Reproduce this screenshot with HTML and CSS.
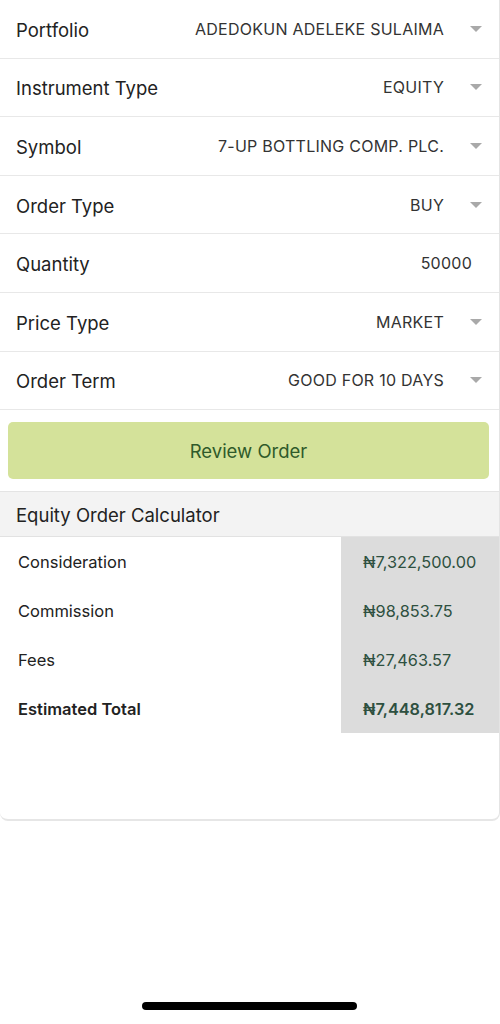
FILE: index.html
```html
<!DOCTYPE html>
<html>
<head>
<meta charset="utf-8">
<link rel="stylesheet" href="styles.css">
</head>
<body>
<div class="card">
  <div class="form">
    <div class="row"><span class="label">Portfolio</span><span class="value"><span class="text">ADEDOKUN ADELEKE SULAIMA</span><span class="caret"></span></span></div>
    <div class="row"><span class="label">Instrument Type</span><span class="value"><span class="text">EQUITY</span><span class="caret"></span></span></div>
    <div class="row"><span class="label">Symbol</span><span class="value"><span class="text">7-UP BOTTLING COMP. PLC.</span><span class="caret"></span></span></div>
    <div class="row"><span class="label">Order Type</span><span class="value"><span class="text">BUY</span><span class="caret"></span></span></div>
    <div class="row"><span class="label">Quantity</span><span class="value"><span class="text qty">50000</span></span></div>
    <div class="row"><span class="label">Price Type</span><span class="value"><span class="text">MARKET</span><span class="caret"></span></span></div>
    <div class="row"><span class="label">Order Term</span><span class="value"><span class="text">GOOD FOR 10 DAYS</span><span class="caret"></span></span></div>
  </div>
  <div class="btn-wrap"><button class="btn">Review Order</button></div>
  <div class="calc-head">Equity Order Calculator</div>
  <div class="calc">
    <div class="c-label">Consideration</div><div class="c-val">₦7,322,500.00</div>
    <div class="c-label">Commission</div><div class="c-val">₦98,853.75</div>
    <div class="c-label">Fees</div><div class="c-val">₦27,463.57</div>
    <div class="c-label bold">Estimated Total</div><div class="c-val bold">₦7,448,817.32</div>
  </div>
  <div class="spacer"></div>
</div>
<div class="home"></div>
</body>
</html>
```
FILE: styles.css
```css
* { box-sizing: border-box; }
html, body { margin: 0; padding: 0; background: #fff; }
body {
  width: 500px;
  height: 1024px;
  font-family: Inter, "Liberation Sans", sans-serif;
  color: #222;
  position: relative;
}
.card {
  width: 500px;
  border-right: 1px solid #e4e4e4;
  border-bottom: 2px solid #e6e6e6;
  border-radius: 0 0 8px 8px;
  overflow: hidden;
}
.form { display: flex; flex-direction: column; }
.row {
  height: 58.6px;
  display: flex;
  align-items: center;
  justify-content: space-between;
  border-bottom: 1.5px solid #e8e8e8;
  padding: 0 17px 0 16px;
}
.label { font-size: 18.5px; color: #222; padding-top: 2px; white-space: nowrap; }
.value { display: flex; align-items: center; }
.text { font-size: 16px; color: #333; letter-spacing: 0.25px; white-space: nowrap; }
.qty { margin-right: 10px; }
.caret {
  width: 0; height: 0;
  border-left: 6px solid transparent;
  border-right: 6px solid transparent;
  border-top: 6px solid #a9a9a9;
  margin-left: 26px;
}
.btn-wrap { padding: 12px 10px 12px 8px; border-bottom: 1.5px solid #e4e4e4; }
.btn {
  display: block;
  width: 100%;
  height: 57px;
  border: none;
  border-radius: 5px;
  background: #d4e29a;
  color: #2f5a2a;
  font-family: inherit;
  font-size: 18.5px;
}
.calc-head {
  background: #f3f3f3;
  height: 45px;
  display: flex;
  align-items: center;
  padding: 2px 16px 0;
  font-size: 18.5px;
  color: #222;
  border-bottom: 1.5px solid #e2e2e2;
}
.calc {
  display: grid;
  grid-template-columns: 341px 1fr;
  grid-auto-rows: 49px;
}
.c-label { display: flex; align-items: center; padding-left: 18px; font-size: 16.5px; color: #222; }
.c-val { display: flex; align-items: center; padding-left: 22px; background: #dcdcdc; font-size: 16.3px; color: #2e5040; }
.bold { font-weight: 600; }
.spacer { height: 86px; }
.home {
  position: absolute;
  left: 142px;
  top: 1002px;
  width: 215px;
  height: 8px;
  border-radius: 4px;
  background: #000;
}
```
